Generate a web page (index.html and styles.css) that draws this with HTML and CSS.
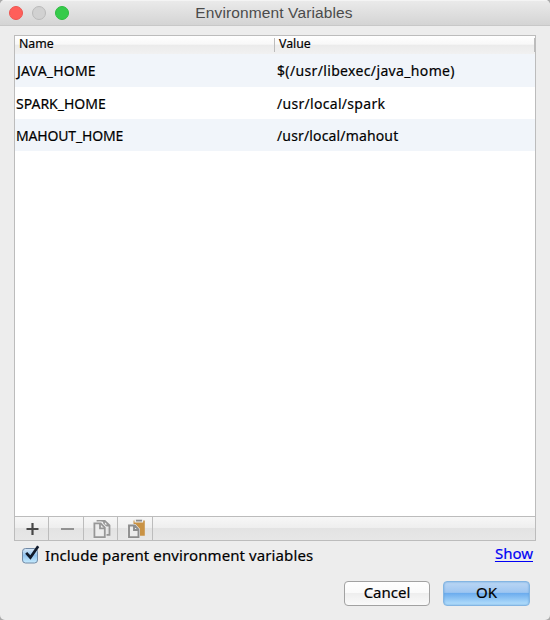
FILE: index.html
```html
<!DOCTYPE html>
<html lang="en">
<head>
<meta charset="utf-8">
<title>Environment Variables</title>
<link rel="stylesheet" href="styles.css">
</head>
<body>
<main class="window">
  <header class="titlebar">
    <div class="lights"><i class="light close"></i><i class="light minimize"></i><i class="light maximize"></i></div>
    <h1 class="title">Environment Variables</h1>
  </header>
  <section class="panel">
    <div class="head"><span class="head-name">Name</span><span class="head-value">Value</span></div>
    <div class="rows">
      <div class="row"><span class="cell"><span class="java">JAVA_HOME</span></span><span class="cell"><span class="java-path">$(/usr/libexec/java_home)</span></span></div>
      <div class="row"><span class="cell"><span class="spark">SPARK_HOME</span></span><span class="cell"><span class="spark-path">/usr/local/spark</span></span></div>
      <div class="row"><span class="cell"><span class="mahout">MAHOUT_HOME</span></span><span class="cell"><span class="mahout-path">/usr/local/mahout</span></span></div>
    </div>
    <div class="toolbar">
      <div class="tool"><svg width="33" height="23" viewBox="0 0 33 23"><path d="M11.5 12h12M17.5 6v12" stroke="#484848" stroke-width="2.2"/></svg></div>
      <div class="tool"><svg width="34" height="23" viewBox="0 0 34 23"><path d="M12 12h13" stroke="#929292" stroke-width="2"/></svg></div>
      <div class="tool"><svg width="33" height="23" viewBox="0 0 33 23" fill="none" stroke="#979797" stroke-width="1.8"><path d="M13.5 6V3.8h7.3l4.7 4.5v9.5H22M20 4v4.5h5"/><path fill="#ededed" stroke="#eee" stroke-width="3.4" d="M10.4 6.3h6.3l4.1 4.2v9.6H10.4z"/><path fill="#ededed" d="M10.4 6.3h6.3l4.1 4.2v9.6H10.4z"/><path d="M16 6.3v5h4.8"/></svg></div>
      <div class="tool"><svg width="34" height="23" viewBox="0 0 34 23"><path fill="#c99244" d="M15.5 3.5h11.3v15.2H15.5z"/><path fill="#eee" d="M16.5 2h8.7v3.5h-8.7z"/><path fill="#8b8b8b" d="M18 2.8h6v1.8h-6z"/><path d="M11 8.5h5.8l3.7 4v7.6H11z" fill="#ededed" stroke="#eee" stroke-width="3"/><path d="M11 8.5h5.8l3.7 4v7.6H11zM16 8.5V13h4.4" fill="#ededed" stroke="#8d8d8d" stroke-width="1.9"/></svg></div>
    </div>
  </section>
  <div class="options">
    <label class="parent"><svg class="check" width="20" height="20" viewBox="0 0 20 20"><defs><linearGradient id="blue" x2="0" y2="1"><stop stop-color="#d9e9f8"/><stop offset=".48" stop-color="#91c3ef"/><stop offset="1" stop-color="#c8edff"/></linearGradient></defs><rect x="1.5" y="3.5" width="15" height="14.5" rx="3" fill="url(#blue)" stroke="#7189a5"/><path d="M5.2 7.8l4.2 4.7L17.2 1.2" fill="none" stroke="#101a2b" stroke-width="2.7"/></svg><span class="parent-text">Include parent environment variables</span></label>
    <a class="show">Show</a>
  </div>
  <footer class="actions"><button class="button cancel">Cancel</button><button class="button ok">OK</button></footer>
</main>
</body>
</html>
```
FILE: styles.css
```css
* { box-sizing: border-box; }
body { margin: 0; background: #aaa; overflow: hidden; color: #000; font: 14px/20px "Noto Sans", sans-serif; -webkit-text-stroke: .18px; }
.window { width: 550px; height: 620px; background: #ededed; border-radius: 5px; overflow: hidden; }
.titlebar { height: 26px; display: grid; grid-template-columns: 80px 1fr 80px; background: linear-gradient(#ebebeb, #d4d4d4); border-bottom: 1px solid #c8c8c8; box-shadow: inset 0 1px #f4f4f4; }
.lights { display: flex; gap: 9px; padding: 6px 0 0 9px; }
.light { width: 14px; height: 14px; border-radius: 50%; border: 1px solid; }
.close { background: #ff5f5a; border-color: #ed5550; }
.minimize { background: #d1d1d1; border-color: #bababa; }
.maximize { background: #35cb4b; border-color: #2dbb40; }
.title { margin: 0; padding: 3px 2px 0 0; text-align: center; color: #4b4b4b; font: 15.5px/20px "Liberation Sans", sans-serif; letter-spacing: .12px; white-space: nowrap; -webkit-text-stroke: 0; }
.panel { width: 522px; height: 506px; margin: 9px 0 0 14px; border: 1px solid #bcbcbc; background: #fff; display: flex; flex-direction: column; }
.head { height: 18px; flex: none; display: grid; grid-template-columns: 259px 1fr; background: linear-gradient(#fff, #f8f8f8 46%, #ebebeb 50%, #f1f1f1); font-size: 12.3px; line-height: 16px; }
.head-name { padding-left: 4px; }
.head-value { padding-left: 4px; margin: 2px 0; line-height: 12px; border-left: 1px solid #bcbcbc; border-right: 1px solid #bcbcbc; }
.rows { flex: 1; }
.row { height: 32px; display: grid; grid-template-columns: 261px 1fr; line-height: 33px; }
.row:first-child { height: 33px; line-height: 34px; }
.row:nth-child(odd) { background: #f1f5fa; }
.cell { padding-left: 1px; white-space: nowrap; }
.java { letter-spacing: .2px; padding-left: 1px; }
.java-path { letter-spacing: .35px; }
.spark-path { letter-spacing: .3px; }
.mahout { letter-spacing: -.17px; }
.mahout-path { letter-spacing: .15px; }
.toolbar { height: 24px; display: flex; border-top: 1px solid #bcbcbc; background: linear-gradient(#f7f7f7, #eee 48%, #e3e3e3 50%, #e7e7e7); }
.tool { height: 23px; border-right: 1px solid #bcbcbc; }
.tool svg { display: block; }
.options { display: flex; justify-content: space-between; height: 30px; padding: 4px 17px 0 21px; font-size: 15px; }
.parent { display: flex; gap: 4px; line-height: 21px; }
.parent-text { letter-spacing: .1px; }
.show { color: #0000f5; text-decoration: underline; text-underline-offset: 2px; line-height: 17px; }
.actions { display: flex; gap: 13px; margin: 10px 0 0 344px; }
.button { height: 25px; padding: 0 0 3px; font: 15px/20px "Noto Sans", sans-serif; border: 1px solid #a2a2a2; border-radius: 4px; width: 86px; color: #000; background: linear-gradient(#fff, #fafafa 47%, #eee 50%, #fafafa); -webkit-text-stroke: .18px; }
.ok { border-color: #84b5e2; background: linear-gradient(#bbd6f4, #9ec6f1 45%, #6dadee 50%, #b7e1fc); box-shadow: inset 0 0 2px #5f9fda; width: 87px; }
```
